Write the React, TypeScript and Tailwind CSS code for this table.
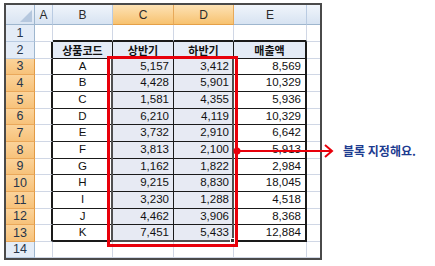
import React from "react";

const rowHeights = ["h-[17px]", "h-[17px]", "h-[16px]", "h-[17px]", "h-[17px]", "h-[16px]", "h-[17px]", "h-[17px]", "h-[16px]", "h-[17px]", "h-[17px]", "h-[16px]", "h-[17px]", "h-[16px]"];

const codes = ["A", "B", "C", "D", "E", "F", "G", "H", "I", "J", "K"];
const h1 = ["5,157", "4,428", "1,581", "6,210", "3,732", "3,813", "1,162", "9,215", "3,230", "4,462", "7,451"];
const h2 = ["3,412", "5,901", "4,355", "4,119", "2,910", "2,100", "1,822", "8,830", "1,288", "3,906", "5,433"];
const sales = ["8,569", "10,329", "5,936", "10,329", "6,642", "5,913", "2,984", "18,045", "4,518", "8,368", "12,884"];

const colW: Record<string, string> = {
  A: "w-[18px]",
  B: "w-[60px]",
  C: "w-[61px]",
  D: "w-[60px]",
  E: "w-[73px]",
  F: "flex-1",
};
const cols = ["A", "B", "C", "D", "E", "F"];
const tableCols = ["B", "C", "D", "E"];

function cellText(r: number, c: string): string {
  if (r === 2) {
    if (c === "B") return "상품코드";
    if (c === "C") return "상반기";
    if (c === "D") return "하반기";
    if (c === "E") return "매출액";
  }
  if (r >= 3 && r <= 13) {
    const i = r - 3;
    if (c === "B") return codes[i];
    if (c === "C") return h1[i];
    if (c === "D") return h2[i];
    if (c === "E") return sales[i];
  }
  return "";
}

function Cell({ r, c }: { r: number; c: string }) {
  const inTable = r >= 2 && r <= 13 && tableCols.includes(c);
  const selected = r >= 3 && r <= 13 && (c === "C" || c === "D");
  let right = "border-r border-r-[#d0d7e5]";
  let bottom = "border-b border-b-[#d0d7e5]";
  if (inTable) {
    right = c === "E" ? "border-r-2 border-r-[#1a1a1a]" : "border-r border-r-[#1a1a1a]";
    bottom = r === 13 ? "border-b-2 border-b-[#1a1a1a]" : "border-b border-b-[#1a1a1a]";
  } else if (c === "A" && r >= 2 && r <= 13) {
    right = "border-r-2 border-r-[#1a1a1a]";
  }
  if (r === 1 && tableCols.includes(c)) {
    bottom = "border-b-2 border-b-[#1a1a1a]";
  }
  if (c === "F") right = "";
  let bg = "bg-white";
  if (selected) bg = "bg-[#e7eaf3]";
  else if (r === 2 && inTable) bg = "bg-[#e4ebf6]";
  const text = cellText(r, c);
  const isHeader = r === 2 && inTable;
  const align = c === "B" || isHeader ? "justify-center" : "justify-end pr-[4px]";
  const font = isHeader
    ? "font-['Noto_Sans_CJK_KR',sans-serif] font-bold text-[11px]"
    : "font-['Liberation_Sans',Arial,sans-serif] text-[11.5px]";
  return (
    <div className={`${colW[c]} h-full shrink-0 flex items-center ${align} ${right} ${bottom} ${bg} ${font} text-[#111] leading-none`}>
      {text}
    </div>
  );
}

function ColHeader({ c }: { c: string }) {
  const sel = c === "C" || c === "D";
  const bg = sel
    ? "bg-gradient-to-b from-[#fde2b4] to-[#f7c26f] border-r-[#e7a95a] border-b-[#e5a048]"
    : "bg-gradient-to-b from-[#f0f5fb] to-[#d7e3f2] border-r-[#b9cbe2] border-b-[#9eb6ce]";
  return (
    <div className={`${colW[c]} h-full shrink-0 flex items-center justify-center border-b ${c === "F" ? "" : "border-r"} ${bg} font-['Liberation_Sans',Arial,sans-serif] text-[12px] text-[#2b2b2b]`}>
      {c === "F" ? "" : c}
    </div>
  );
}

function RowHeader({ r }: { r: number }) {
  const sel = r >= 3 && r <= 13;
  const bg = sel
    ? "bg-gradient-to-b from-[#fbd39a] to-[#f7c27a] border-b-[#eaa85a] border-r-[#e29a44]"
    : "bg-[#e4ecf7] border-b-[#b9cbe2] border-r-[#9eb6ce]";
  return (
    <div className={`w-[29px] h-full shrink-0 flex items-center justify-center border-r border-b ${bg} font-['Liberation_Sans',Arial,sans-serif] text-[12.5px] text-[#27354a]`}>
      {r}
    </div>
  );
}

export default function App() {
  return (
    <div className="relative w-[435px] h-[266px] bg-white overflow-hidden">
      <div className="ml-[4px] pt-[3px]">
        <div className="w-[318px] border-2 border-[#4a4a4a] flex flex-col bg-white">
          <div className="flex h-[20px]">
            <div className="w-[29px] h-full shrink-0 relative border-r border-b border-r-[#9eb6ce] border-b-[#9eb6ce] bg-gradient-to-b from-[#eef3fa] to-[#d9e4f2]">
              <svg className="absolute right-[2px] bottom-[2px]" width="12" height="12" viewBox="0 0 12 12">
                <polygon points="12,0 12,12 0,12" fill="#b5c7de" />
              </svg>
            </div>
            {cols.map((c) => (
              <ColHeader key={c} c={c} />
            ))}
          </div>
          {rowHeights.map((h, i) => {
            const r = i + 1;
            return (
              <div key={r} className={`flex ${h}`}>
                <RowHeader r={r} />
                {cols.map((c) => (
                  <Cell key={c} r={r} c={c} />
                ))}
              </div>
            );
          })}
        </div>
      </div>

      {/* selection outline */}
      <div className="absolute left-[111px] top-[57px] w-[123px] h-[185px] border-2 border-[#505050] pointer-events-none" />
      <div className="absolute left-[230px] top-[238px] w-[5px] h-[5px] bg-[#333] border border-white" />
      {/* red rectangle */}
      <div className="absolute left-[107px] top-[56px] w-[131px] h-[191px] border-[3px] border-[#e8000b]" />

      {/* arrow */}
      <svg className="absolute left-0 top-0" width="435" height="266" viewBox="0 0 435 266">
        <line x1="237" y1="151" x2="332" y2="151" stroke="#e8000b" strokeWidth="2" />
        <circle cx="237" cy="151" r="3.5" fill="#e8000b" />
        <polyline points="325,145 332,151 325,157" fill="none" stroke="#e8000b" strokeWidth="2" />
      </svg>
      <div className="absolute left-[343px] top-[143px] font-['Noto_Sans_CJK_KR',sans-serif] font-bold text-[12px] leading-[16px] text-[#1d3b8f] whitespace-nowrap">
        블록 지정해요.
      </div>
    </div>
  );
}
